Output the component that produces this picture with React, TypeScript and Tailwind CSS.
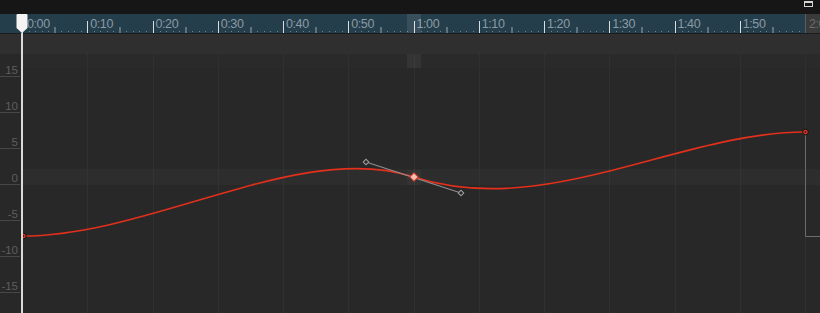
import React from 'react';

const STEP = 65.25;
const majors = ['0:00', '0:10', '0:20', '0:30', '0:40', '0:50', '1:00', '1:10', '1:20', '1:30', '1:40', '1:50'];
const values = ['15', '10', '5', '0', '-5', '-10', '-15'];

function RulerTicks() {
  const dots = [1, 2, 3, 4, 6, 7, 8, 9];
  return (
    <svg className="absolute inset-0" width={STEP} height={19} viewBox={`0 0 ${STEP} 19`}>
      <line x1={0.5} y1={7} x2={0.5} y2={19} stroke="#dcdcdc" strokeWidth={1} />
      <line x1={33} y1={13} x2={33} y2={19} stroke="#9aa8ae" strokeWidth={1} />
      {dots.map((d) => (
        <rect key={d} x={Math.round(d * 6.525)} y={17} width={1} height={1} fill="#71858f" />
      ))}
    </svg>
  );
}

function RulerCell({ label, first }: { label: string; first?: boolean }) {
  return (
    <div className="relative h-full w-[65.25px] shrink-0">
      <RulerTicks />
      <span
        className={`relative block pt-[4px] text-[12.5px] leading-none tracking-[-0.4px] text-[#8a9ba4] ${first ? 'pl-[5px]' : 'pl-[3px]'}`}
      >
        {label}
      </span>
    </div>
  );
}

function WindowIcon() {
  return (
    <svg width="10" height="8" viewBox="0 0 10 8" className="mr-[6px] mt-[1px]">
      <rect x="0.5" y="0.5" width="8" height="5" fill="none" stroke="#d4d4d4" strokeWidth="1" />
      <line x1="0.5" y1="1.5" x2="8.5" y2="1.5" stroke="#d4d4d4" strokeWidth="1" />
    </svg>
  );
}

function Playhead() {
  return (
    <div className="absolute left-[16px] top-[14px] bottom-0 w-[12px] flex flex-col items-center pointer-events-none">
      <svg width="12" height="19" viewBox="0 0 12 19">
        <path d="M1.5 0 H10.5 Q11.5 0 11.5 1 V14 L6 19 L0.5 14 V1 Q0.5 0 1.5 0 Z" fill="#f4f4f4" />
      </svg>
      <div className="w-[2px] flex-1 bg-[#dadada]" />
    </div>
  );
}

function CurveLayer() {
  return (
    <svg className="absolute inset-0 pointer-events-none" width="820" height="313" viewBox="0 0 820 313">
      {/* zero band */}
      <rect x="23" y="169" width="797" height="16" fill="#ffffff" fillOpacity="0.025" />
      {/* selected time column */}
      <rect x="407" y="14" width="14" height="19" fill="#ffffff" fillOpacity="0.09" />
      <rect x="407" y="54" width="14" height="14" fill="#ffffff" fillOpacity="0.05" />
      <rect x="407" y="170" width="14" height="15" fill="#ffffff" fillOpacity="0.03" />
      {/* extrapolation after last key */}
      <path d="M805.5 135 V236.5 H820" fill="none" stroke="#6b6b6b" strokeWidth="1" />
      {/* curve */}
      <path
        d="M22 236 C153 236 300 140 414 177 C545 219.7 680 132 805 132"
        fill="none"
        stroke="#e2301c"
        strokeWidth="1.6"
      />
      {/* tangent handles */}
      <line x1="366" y1="162" x2="461" y2="193" stroke="#8e8e8e" strokeWidth="1.2" />
      <rect x="364" y="160" width="4" height="4" transform="rotate(45 366 162)" fill="#2a2a2a" stroke="#a0a0a0" strokeWidth="1" />
      <rect x="459" y="191" width="4" height="4" transform="rotate(45 461 193)" fill="#2a2a2a" stroke="#a0a0a0" strokeWidth="1" />
      {/* keys */}
      <circle cx="23.5" cy="236" r="2.8" fill="#d8392a" stroke="#111" strokeWidth="1" />
      <circle cx="23.5" cy="236" r="0.9" fill="#3a1510" />
      <circle cx="805.5" cy="132" r="2.8" fill="#d8392a" stroke="#111" strokeWidth="1" />
      <circle cx="805.5" cy="132" r="0.9" fill="#3a1510" />
      <rect x="411" y="174" width="6" height="6" transform="rotate(45 414 177)" fill="#f5bdae" stroke="#cf3b2a" strokeWidth="1" />
    </svg>
  );
}

export default function App() {
  return (
    <div className="relative w-[820px] h-[313px] overflow-hidden bg-[#282828] flex flex-col font-['Liberation_Sans',Arial,sans-serif]">
      {/* top bar */}
      <div className="h-[14px] shrink-0 bg-[#161616] flex justify-end items-start">
        <WindowIcon />
      </div>

      {/* time ruler */}
      <div className="h-[20px] shrink-0 flex border-b border-[#1c1c1c] bg-[#253e4b]">
        <div className="w-[22px] shrink-0" />
        {majors.map((m, i) => (
          <RulerCell key={m} label={m} first={i === 0} />
        ))}
        <div className="flex-1 bg-[#3a3a3a] border-l border-[#5c5c5c] overflow-hidden">
          <span className="block pt-[4px] pl-[3px] text-[12.5px] leading-none tracking-[-0.4px] text-[#6c6c6c] whitespace-nowrap">
            2:00
          </span>
        </div>
      </div>

      {/* track band */}
      <div className="h-[20px] shrink-0 bg-[#2f2f2f]" />

      {/* graph */}
      <div className="flex-1 flex">
        <div className="w-[22px] shrink-0 flex flex-col">
          {values.map((v, i) => (
            <div
              key={v}
              className={`w-[20px] shrink-0 flex items-end justify-end border-b border-[#474747] ${i === 0 ? 'h-[23px]' : 'h-[36px]'}`}
            >
              <span className="pr-[2px] text-[11.5px] leading-none text-[#5e5e5e]">{v}</span>
            </div>
          ))}
        </div>
        {majors.map((m) => (
          <div key={m} className="w-[65.25px] shrink-0 border-l border-[#303030] flex flex-col">
            <div className="h-[14px] bg-[#2a2a2a]" />
          </div>
        ))}
        <div className="flex-1 border-l border-[#303030] flex flex-col">
          <div className="h-[14px] bg-[#2a2a2a]" />
        </div>
      </div>

      <CurveLayer />
      <Playhead />
    </div>
  );
}
